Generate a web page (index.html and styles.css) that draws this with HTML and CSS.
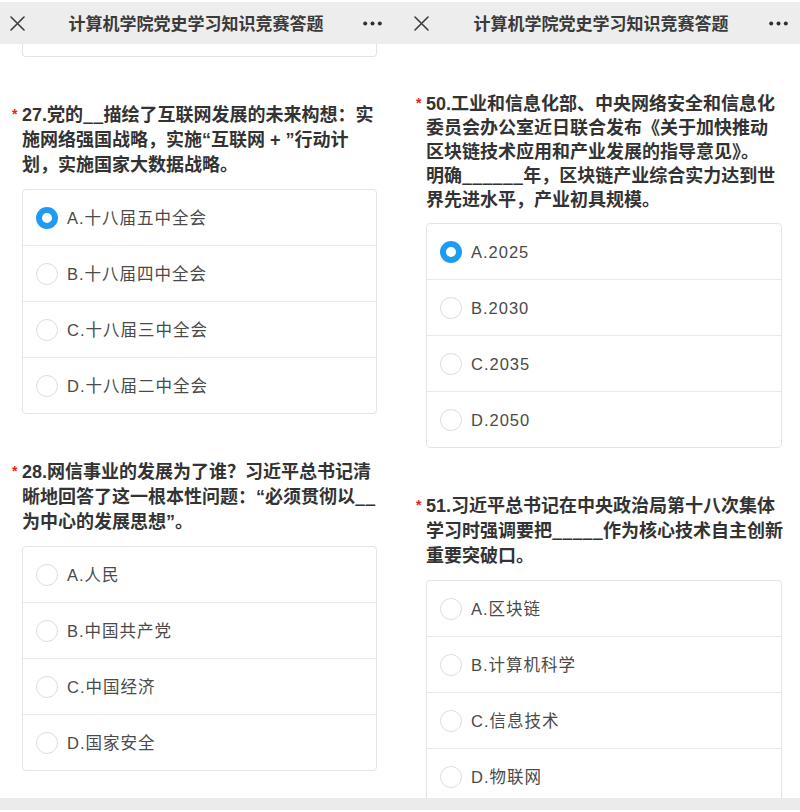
FILE: index.html
```html
<!DOCTYPE html>
<html lang="zh-CN">
<head>
<meta charset="utf-8">
<title>计算机学院党史学习知识竞赛答题</title>
<link rel="stylesheet" href="styles.css">
</head>
<body>
<div class="screens">
  <section class="phone phone--left">
    <header class="bar">
      <span class="bar-btn"><svg class="ico-x" viewBox="0 0 15 15" width="15" height="15"><path d="M1 1L14 14M14 1L1 14"/></svg></span>
      <h1 class="bar-title">计算机学院党史学习知识竞赛答题</h1>
      <span class="bar-btn bar-btn--end"><svg class="ico-dots" viewBox="0 0 19 5" width="19" height="5"><circle cx="2.2" cy="2.5" r="2"/><circle cx="9.5" cy="2.5" r="2"/><circle cx="16.8" cy="2.5" r="2"/></svg></span>
    </header>
    <main class="content">
      <div class="card-tail"></div>
      <div class="question">
        <p class="q-title"><span class="star">*</span><span class="q-text">27.党的<span class="blank">__</span>描绘了互联网发展的未来构想：实<br>施网络强国战略，实施“互联网 + ”行动计<br>划，实施国家大数据战略。</span></p>
        <ul class="card">
          <li class="option"><span class="radio radio--on"></span><span class="opt-text">A.十八届五中全会</span></li>
          <li class="option"><span class="radio"></span><span class="opt-text">B.十八届四中全会</span></li>
          <li class="option"><span class="radio"></span><span class="opt-text">C.十八届三中全会</span></li>
          <li class="option"><span class="radio"></span><span class="opt-text">D.十八届二中全会</span></li>
        </ul>
      </div>
      <div class="question">
        <p class="q-title"><span class="star">*</span><span class="q-text">28.网信事业的发展为了谁？习近平总书记清<br>晰地回答了这一根本性问题：“必须贯彻以<span class="blank">__</span><br>为中心的发展思想”。</span></p>
        <ul class="card">
          <li class="option"><span class="radio"></span><span class="opt-text">A.人民</span></li>
          <li class="option"><span class="radio"></span><span class="opt-text">B.中国共产党</span></li>
          <li class="option"><span class="radio"></span><span class="opt-text">C.中国经济</span></li>
          <li class="option"><span class="radio"></span><span class="opt-text">D.国家安全</span></li>
        </ul>
      </div>
    </main>
    <footer class="bottom"></footer>
  </section>

  <section class="phone phone--right">
    <header class="bar">
      <span class="bar-btn"><svg class="ico-x" viewBox="0 0 15 15" width="15" height="15"><path d="M1 1L14 14M14 1L1 14"/></svg></span>
      <h1 class="bar-title">计算机学院党史学习知识竞赛答题</h1>
      <span class="bar-btn bar-btn--end"><svg class="ico-dots" viewBox="0 0 19 5" width="19" height="5"><circle cx="2.2" cy="2.5" r="2"/><circle cx="9.5" cy="2.5" r="2"/><circle cx="16.8" cy="2.5" r="2"/></svg></span>
    </header>
    <main class="content">
      <div class="question question--first question--compact">
        <p class="q-title"><span class="star">*</span><span class="q-text">50.工业和信息化部、中央网络安全和信息化<br>委员会办公室近日联合发布《关于加快推动<br>区块链技术应用和产业发展的指导意见》。<br>明确<span class="blank">______</span>年，区块链产业综合实力达到世<br>界先进水平，产业初具规模。</span></p>
        <ul class="card">
          <li class="option"><span class="radio radio--on"></span><span class="opt-text">A.2025</span></li>
          <li class="option"><span class="radio"></span><span class="opt-text">B.2030</span></li>
          <li class="option"><span class="radio"></span><span class="opt-text">C.2035</span></li>
          <li class="option"><span class="radio"></span><span class="opt-text">D.2050</span></li>
        </ul>
      </div>
      <div class="question">
        <p class="q-title"><span class="star">*</span><span class="q-text">51.习近平总书记在中央政治局第十八次集体<br>学习时强调要把<span class="blank">_____</span>作为核心技术自主创新<br>重要突破口。</span></p>
        <ul class="card">
          <li class="option"><span class="radio"></span><span class="opt-text">A.区块链</span></li>
          <li class="option"><span class="radio"></span><span class="opt-text">B.计算机科学</span></li>
          <li class="option"><span class="radio"></span><span class="opt-text">C.信息技术</span></li>
          <li class="option"><span class="radio"></span><span class="opt-text">D.物联网</span></li>
        </ul>
      </div>
    </main>
    <footer class="bottom"></footer>
  </section>
</div>
</body>
</html>
```

FILE: styles.css
```css
* {
  box-sizing: border-box;
}

html, body {
  margin: 0;
  padding: 0;
  background: #ffffff;
}

body {
  width: 800px;
  height: 812px;
  overflow: hidden;
  font-family: "Liberation Sans", "Noto Sans CJK SC", sans-serif;
  color: #333333;
}

.screens {
  display: flex;
  width: 800px;
  height: 812px;
}

.phone {
  width: 400px;
  height: 812px;
  display: flex;
  flex-direction: column;
  overflow: hidden;
}

/* top bar */
.bar {
  flex: none;
  margin-top: 2px;
  height: 42px;
  background: #ededed;
  display: flex;
  align-items: center;
}

.phone--left .bar {
  padding: 0 18px 0 10px;
}

.phone--right .bar {
  padding: 0 12px 0 14px;
}

.bar-btn {
  width: 30px;
  flex: none;
  display: flex;
  align-items: center;
}

.bar-btn--end {
  justify-content: flex-end;
}

.ico-x path {
  stroke: #3d3d3d;
  stroke-width: 1.6;
  fill: none;
  stroke-linecap: round;
}

.ico-dots circle {
  fill: #2f2f2f;
}

.bar-title {
  flex: 1;
  margin: 0;
  text-align: center;
  font-family: "Noto Sans CJK SC", sans-serif;
  font-size: 17px;
  font-weight: 700;
  color: #3a3a3a;
  line-height: 42px;
  white-space: nowrap;
}

/* scrolling content */
.content {
  flex: 1;
  overflow: hidden;
}

.phone--left .content {
  padding: 0 23px 0 22px;
}

.phone--right .content {
  padding: 0 18px 0 26px;
}

.card-tail {
  height: 13px;
  border: 1px solid #e4e4e4;
  border-top: none;
  border-radius: 0 0 4px 4px;
}

.question {
  padding-top: 46px;
}

.question--first {
  padding-top: 48px;
}

.q-title {
  margin: 0 0 0 -10px;
  display: flex;
  align-items: flex-start;
  font-size: 18px;
  font-weight: 700;
  line-height: 25px;
  color: #333333;
  white-space: nowrap;
}

.question--compact .q-title {
  line-height: 24px;
}

.star {
  width: 10px;
  flex: none;
  color: #e8211c;
  font-size: 14px;
  font-weight: 700;
  line-height: 22px;
}

.q-text {
  display: block;
}

.blank {
  font-family: "Noto Sans CJK SC", sans-serif;
  line-height: 1;
}

/* option card */
.card {
  list-style: none;
  margin: 11px 0 0;
  padding: 0;
  border: 1px solid #e4e4e4;
  border-radius: 4px;
  background: #ffffff;
}

.option {
  height: 55px;
  display: flex;
  align-items: center;
  padding-left: 13px;
}

.option + .option {
  height: 56px;
  border-top: 1px solid #e9e9e9;
}

.radio {
  width: 22px;
  height: 22px;
  flex: none;
  border-radius: 50%;
  border: 1px solid #dddddd;
  background: #ffffff;
}

.radio--on {
  border: 6px solid #1e9bf2;
}

.opt-text {
  margin-left: 9px;
  font-size: 16.5px;
  letter-spacing: 1px;
  color: #4a4a4a;
  line-height: 22px;
}

/* bottom bar */
.bottom {
  flex: none;
  height: 12px;
  margin-bottom: 2px;
  background: #ebebeb;
}
```
